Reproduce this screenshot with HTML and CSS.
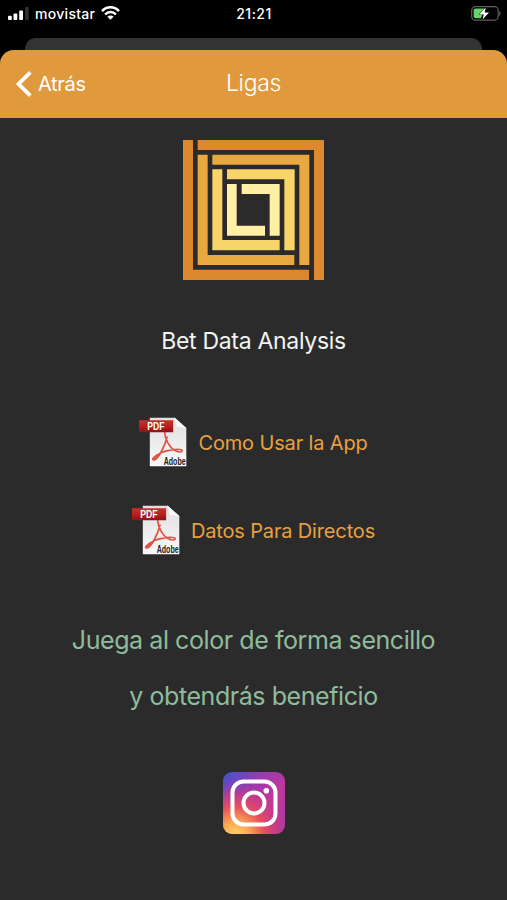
FILE: index.html
```html
<!DOCTYPE html>
<html lang="es">
<head>
<meta charset="utf-8">
<meta name="viewport" content="width=device-width, initial-scale=1">
<title>Ligas</title>
<link rel="stylesheet" href="styles.css">
</head>
<body>
<svg class="defs" width="0" height="0" aria-hidden="true">
  <defs>
    <linearGradient id="red" x1="0" y1="0" x2="0" y2="1"><stop offset="0" stop-color="#c9302a"/><stop offset=".5" stop-color="#b8201f"/><stop offset="1" stop-color="#891315"/></linearGradient>
    <linearGradient id="paper" x1="0" y1="0" x2="0" y2="1"><stop offset="0" stop-color="#dedede"/><stop offset="1" stop-color="#fafafa"/></linearGradient>
    <symbol id="pdf" viewBox="0 0 142 150" preserveAspectRatio="none">
      <path d="M32 2H106L140 34V148H32Z" fill="url(#paper)"/>
      <path d="M104 1L141 34L112 30Z" fill="#f8f8f8"/>
      <g fill="none" stroke="#df5546" stroke-linecap="round" stroke-linejoin="round">
        <path d="M76 46C77 68 90 90 105 100C115 106 127 107 128 101C125 93 82 98 60 110C44 119 36 130 45 129C57 125 76 90 83 60" stroke-width="5"/>
        <path d="M42 126L55 115" stroke-width="8"/>
      </g>
      <path d="M0 10H101V46H0Z" fill="url(#red)"/>
      <text x="50" y="38" class="pdf-tag" text-anchor="middle" textLength="51" lengthAdjust="spacingAndGlyphs">PDF</text>
      <text x="73" y="143" class="pdf-brand" textLength="65" lengthAdjust="spacingAndGlyphs">Adobe</text>
    </symbol>
  </defs>
</svg>
<div class="screen">
  <header class="status">
    <div class="carrier">
      <svg class="signal" width="21" height="13" viewBox="0 0 21 13"><g fill="#fff"><rect y="8.8" width="3.8" height="4.2" rx="1"/><rect x="5.5" y="6.6" width="3.8" height="6.4" rx="1"/><rect x="11.2" y="3.5" width="3.8" height="9.5" rx="1"/></g><rect x="17" width="3.8" height="13" rx="1" fill="#303030"/></svg>
      <span class="operator">movistar</span>
      <svg class="wifi" width="19" height="14" viewBox="0 0 19 14"><g fill="none" stroke="#fff" stroke-width="2.5"><path d="M1 5.1C5.8.1 13.2.1 18 5.1"/><path d="M4.1 8.5C7.2 5.3 11.8 5.3 14.9 8.5"/></g><path d="M9.5 13.8L6.4 10.7C8.2 9.2 10.8 9.2 12.6 10.7Z" fill="#fff"/></svg>
    </div>
    <span class="clock">21:21</span>
    <svg class="battery" width="30" height="15" viewBox="0 0 30 15"><rect x=".7" y=".7" width="26.5" height="13.5" rx="3.8" fill="none" stroke="#606060" stroke-width="1.2"/><path d="M4.6 2.6H13.5L10 12.3H4.6Q2.6 12.3 2.6 10.3V4.6Q2.6 2.6 4.6 2.6Z" fill="#65d36b"/><path d="M28.3 5V10C30.2 9 30.2 6 28.3 5Z" fill="#606060"/><path d="M14.8 1.2L8.3 8.4H12.8L11.6 13.4L18 6.4H13.6Z" fill="#fff" stroke="#000" stroke-width=".8" paint-order="stroke"/></svg>
  </header>
  <div class="back-card"></div>
  <main class="sheet">
    <nav class="navbar">
      <a class="back"><svg width="17" height="28" viewBox="0 0 17 28"><path d="M15.3 2.3L3.6 14L15.3 25.7" fill="none" stroke="#fff" stroke-width="3.8"/></svg><span class="back-label">Atrás</span></a>
      <h1 class="title">Ligas</h1>
    </nav>
    <section class="content">
      <svg class="logo" width="141" height="140" viewBox="30 30 423 420" preserveAspectRatio="none">
        <g fill="#dc882f"><path d="M30 30H60V419H408V450H30Z"/><path d="M74 30H453V450H423V60H74Z"/></g>
        <g fill="#e9a840"><path d="M74 74H104V375H364V405H74Z"/><path d="M118 74H409V405H379V104H118Z"/></g>
        <g fill="#f9d469"><path d="M118 118H148V330H320V361H118Z"/><path d="M162 118H365V361H334V148H162Z"/></g>
        <g fill="#fff0a6"><path d="M162 162H191V287H276V317H162Z"/><path d="M206 162H320V317H290V192H206Z"/></g>
      </svg>
      <h2 class="brand"><span>Bet Data Analysis</span></h2>
      <div class="links">
        <a class="doc"><svg width="48" height="50"><use href="#pdf"/></svg><span class="doc-a">Como Usar la App</span></a>
        <a class="doc"><svg width="48" height="50"><use href="#pdf"/></svg><span class="doc-b">Datos Para Directos</span></a>
      </div>
      <p class="tagline"><span class="line-a">Juega al color de forma sencillo</span><span class="line-b">y obtendrás beneficio</span></p>
      <svg class="instagram" width="62" height="62" viewBox="0 0 62 62">
        <defs>
          <linearGradient id="ig" x1="0" y1="0" x2="1" y2="1"><stop offset="0" stop-color="#4253cf"/><stop offset=".35" stop-color="#9a3bb0"/><stop offset=".6" stop-color="#c0379a"/><stop offset="1" stop-color="#a83aa8"/></linearGradient>
          <radialGradient id="warm" cx=".2" cy="1.02" r=".9"><stop offset="0" stop-color="#ffd66c"/><stop offset=".25" stop-color="#f9a852"/><stop offset=".52" stop-color="#e64f5c"/><stop offset=".95" stop-color="#d0357f" stop-opacity="0"/></radialGradient>
        </defs>
        <rect width="62" height="62" rx="9" fill="url(#ig)"/>
        <rect width="62" height="62" rx="9" fill="url(#warm)"/>
        <g fill="none" stroke="#fff" stroke-width="4"><rect x="9.5" y="9.5" width="43" height="43" rx="11"/><circle cx="31" cy="31" r="10.5"/></g><circle cx="43.3" cy="18.8" r="2.8" fill="#fff"/>
      </svg>
    </section>
  </main>
</div>
</body>
</html>
```
FILE: styles.css
```css
* { box-sizing: border-box; }
body { margin: 0; background: #000; font-family: Inter, "Liberation Sans", sans-serif; color: #fff; }
h1, h2, p { margin: 0; font-weight: 400; }
span { white-space: nowrap; }
.defs { position: absolute; }
.screen { width: 507px; height: 900px; display: flex; flex-direction: column; overflow: hidden; background: #000; }
.status { height: 38px; display: grid; grid-template-columns: 1fr auto 1fr; padding: 0 7px 12px 8px; align-items: center; }
.carrier { display: flex; align-items: center; }
.operator { margin-left: 6px; width: 60px; font-size: 14px; font-weight: 500; letter-spacing: .3px; }
.wifi { margin-left: 6px; }
.clock { font-size: 14px; font-weight: 500; letter-spacing: .5px; }
.battery { justify-self: end; margin-right: -1px; }
.back-card { height: 26px; margin: 0 25px -14px; background: #333; border-radius: 11px 11px 0 0; }
.sheet { position: relative; flex: 1; display: flex; flex-direction: column; background: #2b2b2b; border-radius: 14px 14px 0 0; overflow: hidden; }
.navbar { height: 68px; background: #e0993c; display: grid; grid-template-columns: 1fr auto 1fr; align-items: center; padding: 0 15px; }
.back { display: flex; align-items: center; }
.back svg { margin-right: 6px; }
.back-label { font-size: 20px; letter-spacing: -.3px; }
.title { font-size: 23px; font-weight: 300; letter-spacing: -.3px; margin-top: -2px; }
.content { flex: 1; display: flex; flex-direction: column; align-items: center; padding-top: 22px; }
.brand { margin-top: 46px; height: 30px; line-height: 30px; font-size: 23px; letter-spacing: -.3px; color: #f4f4f4; }
.links { margin-top: 61px; display: flex; flex-direction: column; align-items: center; gap: 38px; }
.doc { display: flex; align-items: center; gap: 11px; color: #e5a143; font-size: 20px; }
.doc svg { flex: none; }
.doc span { padding-top: 1px; letter-spacing: -.15px; }
.tagline { margin-top: 69px; display: flex; flex-direction: column; align-items: center; gap: 24px; color: #8fbc9c; font-size: 25px; line-height: 32px; letter-spacing: -.43px; }
.instagram { margin-top: 60px; }
.pdf-tag { font: 700 30px "Liberation Sans", sans-serif; fill: #fff; }
.pdf-brand { font: 700 30px "Liberation Sans", sans-serif; fill: #222; }
```
